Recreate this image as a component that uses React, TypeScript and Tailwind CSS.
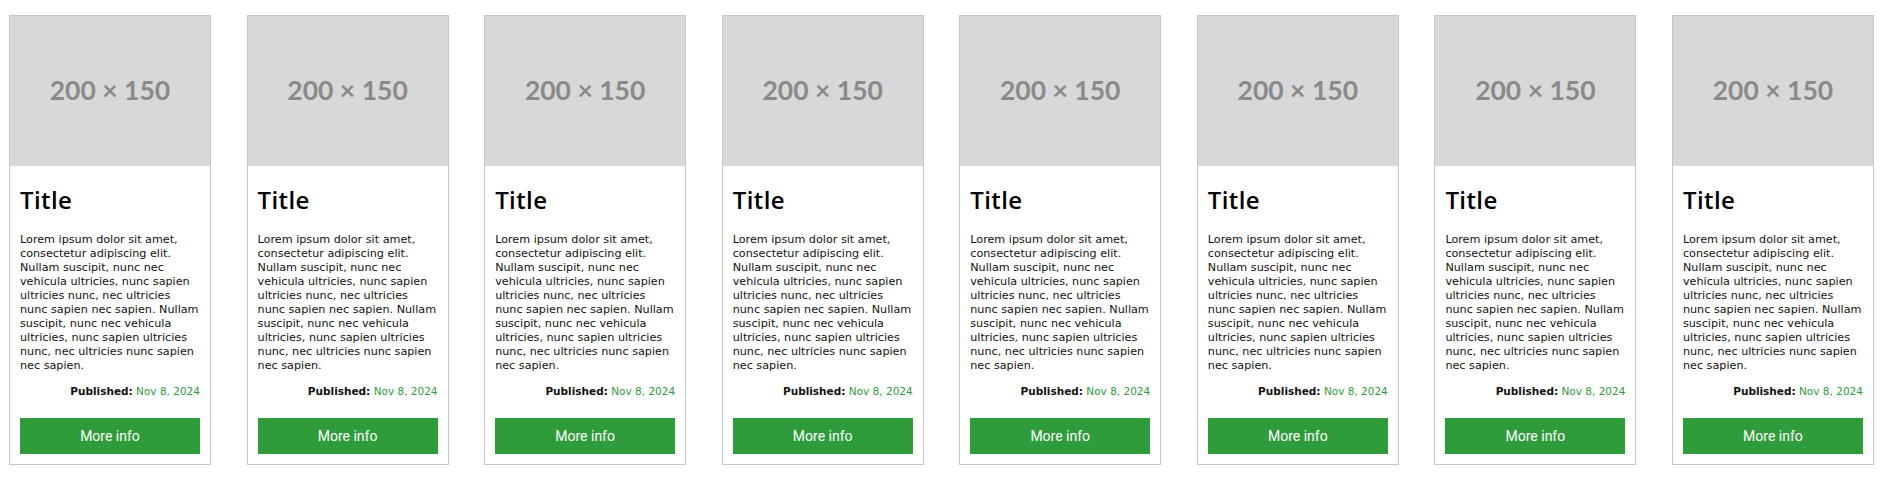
import React from "react";

const body =
  "Lorem ipsum dolor sit amet, consectetur adipiscing elit. Nullam suscipit, nunc nec vehicula ultricies, nunc sapien ultricies nunc, nec ultricies nunc sapien nec sapien. Nullam suscipit, nunc nec vehicula ultricies, nunc sapien ultricies nunc, nec ultricies nunc sapien nec sapien.";

function Card() {
  return (
    <div className="w-[202px] h-[450px] border border-[#c8c8c8] bg-white flex flex-col shrink-0">
      <div className="h-[150px] bg-[#d8d8d8] flex items-center justify-center">
        <span className="font-['Lato',sans-serif] font-bold text-[26.5px] text-[#8a8a8a]">
          200 × 150
        </span>
      </div>
      <div className="flex-1 flex flex-col px-[10px] pb-[10px]">
        <h2 className="mt-[20px] font-['Open_Sans',sans-serif] font-semibold text-[24px] leading-[28px] tracking-[0.4px] text-black">
          Title
        </h2>
        <p className="mt-[19px] font-['DejaVu_Sans',sans-serif] text-[11.2px] leading-[14px] text-[#111]">
          {body}
        </p>
        <div className="mt-[11px] text-right font-['DejaVu_Sans',sans-serif] text-[10.5px] leading-[14px]">
          <span className="font-bold text-[#111]">Published:</span>{" "}
          <span className="text-[#2e9c3a]">Nov 8, 2024</span>
        </div>
        <button className="mt-auto h-[36px] w-full bg-[#2e9c3a] text-white font-['Roboto',sans-serif] text-[14px]">
          More info
        </button>
      </div>
    </div>
  );
}

export default function App() {
  return (
    <div className="w-[1887px] h-[478px] bg-white pt-[15px] pl-[9px] pr-[13px] flex justify-between items-start">
      {Array.from({ length: 8 }).map((_, i) => (
        <Card key={i} />
      ))}
    </div>
  );
}
